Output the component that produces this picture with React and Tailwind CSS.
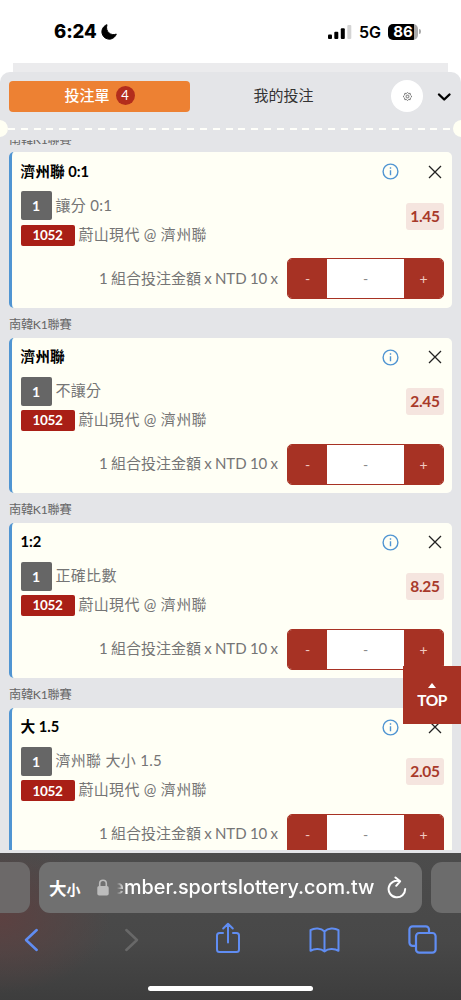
import { useState } from 'react';

const bets = [
  { id: 1, title: '濟州聯 0:1', market: '讓分 0:1', odds: '1.45' },
  { id: 2, title: '濟州聯', market: '不讓分', odds: '2.45' },
  { id: 3, title: '1:2', market: '正確比數', odds: '8.25' },
  { id: 4, title: '大 1.5', market: '濟州聯 大小 1.5', odds: '2.05' }
];

function StatusBar() {
  return (
    <div className="flex h-[63px] shrink-0 items-center bg-white pl-[54px] pr-[40px] font-['Inter','Liberation_Sans',sans-serif] text-black">
      <span className="text-[18.5px] leading-none font-extrabold tracking-[-0.1px]">6:24</span>
      <svg className="ml-[4px]" width="16" height="16" viewBox="0 0 16 16">
        <path d="M6 0.7A7.400 7.400 0 1 0 15.300 10.100C10 12.300 3.800 7.500 6 0.700z" fill="#000" stroke="#000" strokeLinejoin="round" />
      </svg>
      <div className="ml-auto flex items-center">
        <svg width="24" height="16" viewBox="0 0 24 16">
          <rect x="0" y="10.5" width="4" height="4.5" rx="1" />
          <rect x="6.3" y="7.7" width="4" height="7.3" rx="1" />
          <rect x="12.8" y="4.3" width="4" height="10.7" rx="1" />
          <rect x="19.3" y="1" width="4" height="14" rx="1" fill="#d4d4d4" />
        </svg>
        <span className="ml-[7px] text-[16px] leading-none font-semibold">5G</span>
        <div className="ml-[7px] flex h-[16px] w-[30px] items-center justify-center rounded-[5px] bg-[linear-gradient(90deg,#000_86%,#aaa_86%)] text-[15px] leading-none font-bold text-white">86</div>
        <div className="ml-px h-[5px] w-[2px] rounded-r-full bg-[#aaa]" />
      </div>
    </div>
  );
}

function SlipHeader() {
  return (
    <div className="shrink-0">
      <div className="flex h-[48px] items-center pl-[9px] pr-[9px]">
        <button className="flex h-[31px] w-[181px] items-center justify-center gap-[6px] rounded-[4px] bg-[#ed8133] pb-px text-[15px] font-medium text-white">
          投注單
          <span className="flex h-[19px] w-[19px] items-center justify-center rounded-full bg-[#b32d1c] text-[13px] leading-none font-normal">4</span>
        </button>
        <button className="w-[187px] pb-px text-center text-[15px] text-[#333]">我的投注</button>
        <button className="ml-[14px] flex h-8 w-8 items-center justify-center rounded-full bg-white">
          <svg width="9" height="9" viewBox="0 0 20 20" fill="none" stroke="#555" strokeWidth="1.7" strokeLinejoin="round">
            <path d="M10 1l2.5 2.2 3.5-.2.4 3.5L19 9v2l-2.6 2.5L16 17l-3.5-.2L10 19l-2.5-2.2L4 17l-.4-3.500L1 11V9l2.600-2.500L4 3l3.500.2z" />
            <rect x="7" y="7" width="6" height="6" rx="1.5" />
          </svg>
        </button>
        <svg className="ml-auto mt-[2px]" width="16" height="10" viewBox="0 0 16 10" fill="none" stroke="#000" strokeWidth="2.4" strokeLinecap="round" strokeLinejoin="round">
          <path d="M3 2.5l5.2 5L13.5 2.5" />
        </svg>
      </div>
      {/* ticket tear line */}
      <div className="flex h-[17px] items-center overflow-hidden">
        <div className="-ml-[9px] h-[17px] w-[17px] shrink-0 rounded-full bg-[#fffff3]" />
        <div className="h-[2px] flex-1 bg-[repeating-linear-gradient(90deg,#fffffa_0_7px,transparent_7px_12.800px)]" />
        <div className="-mr-[9px] h-[17px] w-[17px] shrink-0 rounded-full bg-[#fffff3]" />
      </div>
    </div>
  );
}

function Stepper() {
  const [count, setCount] = useState(0);

  return (
    <div className="flex h-[41px] w-[157px] overflow-hidden rounded-[5px] border border-[#a73224] bg-white text-[14px] text-[#f0c9c2]">
      <button className="w-[39px] bg-[#a73224]" onClick={() => setCount(Math.max(0, count - 1))}>-</button>
      <div className="flex flex-1 items-center justify-center text-[#888]">{count || '-'}</div>
      <button className="w-[39px] bg-[#a73224]" onClick={() => setCount(count + 1)}>+</button>
    </div>
  );
}

function BetCard({ bet }) {
  return (
    <div>
      <div className="flex h-[29.6px] items-center pl-[9px] pt-[5px] text-[12.2px] tracking-[-0.25px] text-[#666]">南韓K1聯賽</div>
      <div className="ml-[9px] mr-[9px] h-[155.5px] rounded-[5px] border-l-[3px] border-[#5095d2] bg-[#fffff5] pl-[8.5px] pr-[8px]">
        <div className="flex h-[39px] items-center">
          <h2 className="pb-[2px] text-[14.7px] font-bold text-black">{bet.title}</h2>
          <svg className="ml-auto" width="17" height="17" viewBox="0 0 17 17" fill="none" stroke="#5095d2" strokeWidth="1.4">
            <circle cx="8.5" cy="8.5" r="7.4" />
            <path d="M8.5 7.3v5M8.5 4.3v1.5" />
          </svg>
          <svg className="ml-[29px] mr-[2px]" width="14" height="14" viewBox="0 0 14 14" stroke="#222" strokeWidth="1.3">
            <path d="M1 1l12 12M13 1L1 13" />
          </svg>
        </div>
        <div className="flex items-center">
          <div className="flex flex-col gap-[4.5px] text-[15px] tracking-[0.3px] text-[#757575]">
            <div className="flex h-[29px] items-center gap-[4px]">
              <span className="flex h-[29px] w-[31px] items-center justify-center rounded-[2px] bg-[#666] text-[14px] font-bold tracking-normal text-white">1</span>
              <span className="pb-px">{bet.market}</span>
            </div>
            <div className="flex h-[21px] items-center gap-[4px]">
              <span className="flex h-[21px] w-[54px] items-center justify-center rounded-[2px] bg-[#a91f16] text-[13.500px] font-bold tracking-[-0.3px] text-white">1052</span>
              <span className="pb-[2px]">蔚山現代 @ 濟州聯</span>
            </div>
          </div>
          <span className="mb-[5px] ml-auto flex h-[27px] w-[38px] items-center justify-center rounded-[3px] bg-[#f5e5df] text-[15.5px] font-bold tracking-[-0.25px] text-[#a83a2b]">{bet.odds}</span>
        </div>
        <div className="mt-[12.5px] flex items-center justify-end gap-[9px] text-[15px] text-[#757575]">
          <span className="pb-px [word-spacing:-0.600px]">1 組合投注金額 x NTD 10 x</span>
          <Stepper />
        </div>
      </div>
    </div>
  );
}

function BrowserBar() {
  return (
    <div className="h-[147px] shrink-0 bg-[radial-gradient(ellipse_110px_75px_at_0px_65px,#5c4141,transparent),linear-gradient(#4c4c4c,#484848_60%,#3d3d3d)] text-white">
      <div className="flex gap-[9px] overflow-hidden pt-[9px]">
        <div className="h-[51px] w-[30px] shrink-0 rounded-r-[11px] bg-[#6c6969]" />
        <div className="flex h-[51px] w-[383px] shrink-0 items-center rounded-[11px] bg-[#707070] pl-[10px] pr-[15px]">
          <span className="shrink-0 font-['Noto_Sans_CJK_TC',sans-serif] text-[17.500px] leading-none font-bold">
            大<span className="text-[14px]">小</span>
          </span>
          <svg className="ml-[16px] shrink-0" width="12" height="17" viewBox="0 0 12 17">
            <path d="M2.7 8V4.5a3.3 3.3 0 0 1 6.6 0V8" fill="none" stroke="#bcbcbc" strokeWidth="1.6" />
            <rect x="0.3" y="7" width="11.4" height="9.6" rx="1.8" fill="#bcbcbc" />
          </svg>
          <div className="ml-[8px] flex h-7 w-[258px] shrink-0 items-center justify-end overflow-hidden font-['Inter','Liberation_Sans',sans-serif] text-[19.800px] font-medium tracking-[0.02px] [mask-image:linear-gradient(90deg,transparent,#000_8px)]">
            <span>ember.sportslottery.com.tw</span>
          </div>
          <svg className="ml-auto shrink-0" width="20" height="24" viewBox="0 0 20 24" fill="none" stroke="#fff" strokeWidth="2" strokeLinecap="round" strokeLinejoin="round">
            <path d="M12.6 5.2A8.3 8.3 0 1 0 18.2 13M8.5 1.5l4.6 3.8-3.9 4.5" />
          </svg>
        </div>
        <div className="h-[51px] w-[30px] shrink-0 rounded-l-[11px] bg-[#6c6c6c]" />
      </div>
      <div className="-mr-[20px] -ml-[20px] grid h-[53px] grid-cols-[102px_98px_95px_99px_97px_10px] items-center justify-items-center">
        <svg width="15" height="24" viewBox="0 0 15 24" fill="none" stroke="#608df3" strokeWidth="2.5" strokeLinecap="round" strokeLinejoin="round">
          <path d="M12.7 2L2 12l10.7 10" />
        </svg>
        <svg width="15" height="24" viewBox="0 0 15 24" fill="none" stroke="#686868" strokeWidth="2.5" strokeLinecap="round" strokeLinejoin="round">
          <path d="M2.3 2L13 12 2.3 22" />
        </svg>
        <svg className="-mt-[4px]" width="26" height="32" viewBox="0 0 26 32" fill="none" stroke="#608df3" strokeWidth="2" strokeLinecap="round" strokeLinejoin="round">
          <path d="M8 11H4.5A2.5 2.5 0 0 0 2 13.500v14A2.500 2.500 0 0 0 4.500 30h17a2.500 2.500 0 0 0 2.500-2.500v-14A2.500 2.500 0 0 0 21.500 11H18M13 20.500V2M8.200 6.500L13 1.800l4.800 4.700" />
        </svg>
        <svg width="31" height="26" viewBox="0 0 31 26" fill="none" stroke="#608df3" strokeWidth="2" strokeLinejoin="round">
          <path d="M15.500 4.500C12 .8 5.500.6 1.500 3.200v20.600c4-2.500 10.500-2.300 14 .6V4.500zM15.500 4.500C19 .8 25.500.6 29.500 3.200v20.600c-4-2.500-10.500-2.300-14 .6" />
        </svg>
        <svg width="29" height="29" viewBox="0 0 29 29" fill="none" stroke="#608df3" strokeWidth="2.200" strokeLinejoin="round">
          <path d="M7.500 20.800H4.600A3.200 3.200 0 0 1 1.400 17.600V4.600A3.200 3.200 0 0 1 4.600 1.400h13.200A3.200 3.200 0 0 1 21 4.600v3" />
          <rect x="8" y="8" width="19.600" height="19.600" rx="3.200" />
        </svg>
      </div>
      <div className="mx-auto mt-[20px] h-[5px] w-[165px] rounded-full bg-white" />
    </div>
  );
}

export default function App() {
  return (
    <div className="relative flex h-[1000px] w-[461px] flex-col overflow-hidden bg-white font-['Lato','Noto_Sans_CJK_TC',sans-serif]">
      <StatusBar />
      <div className="mx-[13px] h-[9px] shrink-0 bg-[#ebebed]" />
      <div className="flex h-[781px] shrink-0 flex-col rounded-t-[10px] bg-[#e4e5e8]">
        <SlipHeader />
        <div className="mt-[3px] h-[710px] shrink-0 overflow-hidden">
          <div className="-mt-[17.2px]">
            {bets.map((bet) => (
              <BetCard key={bet.id} bet={bet} />
            ))}
          </div>
        </div>
      </div>
      <BrowserBar />

      <button className="absolute top-[666px] right-0 flex h-[58px] w-[58px] flex-col items-center bg-[#a73224] pt-[17px] text-[15.500px] leading-none font-bold tracking-[-0.500px] text-white">
        <span className="mb-[5px] h-0 w-0 border-x-[4.500px] border-b-[5px] border-x-transparent border-b-white" />
        TOP
      </button>
    </div>
  );
}
